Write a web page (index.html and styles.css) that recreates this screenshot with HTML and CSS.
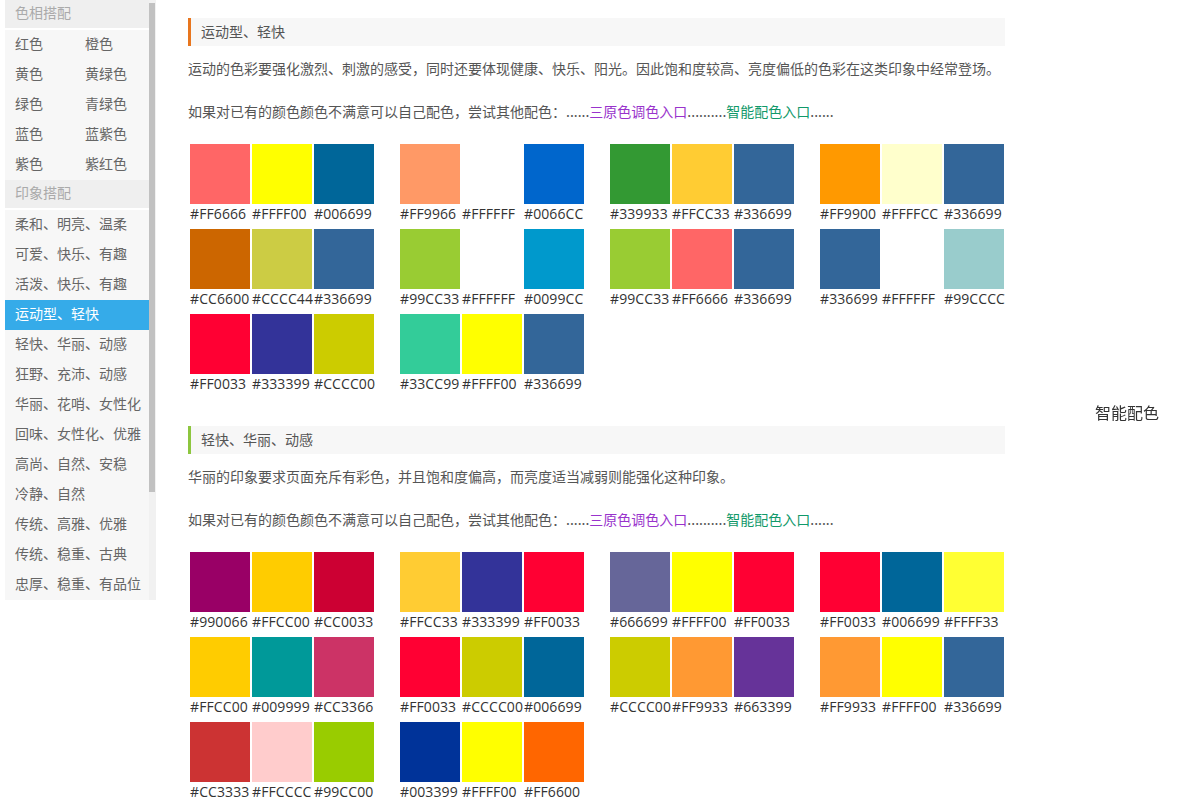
FILE: index.html
```html
<!DOCTYPE html>
<html lang="zh-CN">
<head>
<meta charset="utf-8">
<title>配色</title>
<link rel="stylesheet" href="styles.css">
</head>
<body>
<div class="page">
  <aside class="sidebar">
    <div class="nav">
      <div class="nav-head">色相搭配</div>
      <div class="nav-grid">
        <a class="nav-item">红色</a><a class="nav-item">橙色</a>
        <a class="nav-item">黄色</a><a class="nav-item">黄绿色</a>
        <a class="nav-item">绿色</a><a class="nav-item">青绿色</a>
        <a class="nav-item">蓝色</a><a class="nav-item">蓝紫色</a>
        <a class="nav-item">紫色</a><a class="nav-item">紫红色</a>
      </div>
      <div class="nav-head">印象搭配</div>
      <a class="nav-item">柔和、明亮、温柔</a>
      <a class="nav-item">可爱、快乐、有趣</a>
      <a class="nav-item">活泼、快乐、有趣</a>
      <a class="nav-item active">运动型、轻快</a>
      <a class="nav-item">轻快、华丽、动感</a>
      <a class="nav-item">狂野、充沛、动感</a>
      <a class="nav-item">华丽、花哨、女性化</a>
      <a class="nav-item">回味、女性化、优雅</a>
      <a class="nav-item">高尚、自然、安稳</a>
      <a class="nav-item">冷静、自然</a>
      <a class="nav-item">传统、高雅、优雅</a>
      <a class="nav-item">传统、稳重、古典</a>
      <a class="nav-item">忠厚、稳重、有品位</a>
    </div>
    <div class="track"><div class="thumb"></div></div>
  </aside>

  <main class="main">
    <section class="section">
      <h2 class="title orange">运动型、轻快</h2>
      <p class="desc">运动的色彩要强化激烈、刺激的感受，同时还要体现健康、快乐、阳光。因此饱和度较高、亮度偏低的色彩在这类印象中经常登场。</p>
      <p class="links">如果对已有的颜色颜色不满意可以自己配色，尝试其他配色：......<a class="lk-purple">三原色调色入口</a>..........<a class="lk-green">智能配色入口</a>......</p>
      <div class="palettes">
        <div class="pal"><div class="c"><i style="background:#FF6666"></i><span>#FF6666</span></div><div class="c"><i style="background:#FFFF00"></i><span>#FFFF00</span></div><div class="c"><i style="background:#006699"></i><span>#006699</span></div></div>
        <div class="pal"><div class="c"><i style="background:#FF9966"></i><span>#FF9966</span></div><div class="c"><i style="background:#FFFFFF"></i><span>#FFFFFF</span></div><div class="c"><i style="background:#0066CC"></i><span>#0066CC</span></div></div>
        <div class="pal"><div class="c"><i style="background:#339933"></i><span>#339933</span></div><div class="c"><i style="background:#FFCC33"></i><span>#FFCC33</span></div><div class="c"><i style="background:#336699"></i><span>#336699</span></div></div>
        <div class="pal"><div class="c"><i style="background:#FF9900"></i><span>#FF9900</span></div><div class="c"><i style="background:#FFFFCC"></i><span>#FFFFCC</span></div><div class="c"><i style="background:#336699"></i><span>#336699</span></div></div>

        <div class="pal"><div class="c"><i style="background:#CC6600"></i><span>#CC6600</span></div><div class="c"><i style="background:#CCCC44"></i><span>#CCCC44</span></div><div class="c"><i style="background:#336699"></i><span>#336699</span></div></div>
        <div class="pal"><div class="c"><i style="background:#99CC33"></i><span>#99CC33</span></div><div class="c"><i style="background:#FFFFFF"></i><span>#FFFFFF</span></div><div class="c"><i style="background:#0099CC"></i><span>#0099CC</span></div></div>
        <div class="pal"><div class="c"><i style="background:#99CC33"></i><span>#99CC33</span></div><div class="c"><i style="background:#FF6666"></i><span>#FF6666</span></div><div class="c"><i style="background:#336699"></i><span>#336699</span></div></div>
        <div class="pal"><div class="c"><i style="background:#336699"></i><span>#336699</span></div><div class="c"><i style="background:#FFFFFF"></i><span>#FFFFFF</span></div><div class="c"><i style="background:#99CCCC"></i><span>#99CCCC</span></div></div>

        <div class="pal"><div class="c"><i style="background:#FF0033"></i><span>#FF0033</span></div><div class="c"><i style="background:#333399"></i><span>#333399</span></div><div class="c"><i style="background:#CCCC00"></i><span>#CCCC00</span></div></div>
        <div class="pal"><div class="c"><i style="background:#33CC99"></i><span>#33CC99</span></div><div class="c"><i style="background:#FFFF00"></i><span>#FFFF00</span></div><div class="c"><i style="background:#336699"></i><span>#336699</span></div></div>
      </div>
    </section>

    <section class="section">
      <h2 class="title green">轻快、华丽、动感</h2>
      <p class="desc">华丽的印象要求页面充斥有彩色，并且饱和度偏高，而亮度适当减弱则能强化这种印象。</p>
      <p class="links">如果对已有的颜色颜色不满意可以自己配色，尝试其他配色：......<a class="lk-purple">三原色调色入口</a>..........<a class="lk-green">智能配色入口</a>......</p>
      <div class="palettes">
        <div class="pal"><div class="c"><i style="background:#990066"></i><span>#990066</span></div><div class="c"><i style="background:#FFCC00"></i><span>#FFCC00</span></div><div class="c"><i style="background:#CC0033"></i><span>#CC0033</span></div></div>
        <div class="pal"><div class="c"><i style="background:#FFCC33"></i><span>#FFCC33</span></div><div class="c"><i style="background:#333399"></i><span>#333399</span></div><div class="c"><i style="background:#FF0033"></i><span>#FF0033</span></div></div>
        <div class="pal"><div class="c"><i style="background:#666699"></i><span>#666699</span></div><div class="c"><i style="background:#FFFF00"></i><span>#FFFF00</span></div><div class="c"><i style="background:#FF0033"></i><span>#FF0033</span></div></div>
        <div class="pal"><div class="c"><i style="background:#FF0033"></i><span>#FF0033</span></div><div class="c"><i style="background:#006699"></i><span>#006699</span></div><div class="c"><i style="background:#FFFF33"></i><span>#FFFF33</span></div></div>

        <div class="pal"><div class="c"><i style="background:#FFCC00"></i><span>#FFCC00</span></div><div class="c"><i style="background:#009999"></i><span>#009999</span></div><div class="c"><i style="background:#CC3366"></i><span>#CC3366</span></div></div>
        <div class="pal"><div class="c"><i style="background:#FF0033"></i><span>#FF0033</span></div><div class="c"><i style="background:#CCCC00"></i><span>#CCCC00</span></div><div class="c"><i style="background:#006699"></i><span>#006699</span></div></div>
        <div class="pal"><div class="c"><i style="background:#CCCC00"></i><span>#CCCC00</span></div><div class="c"><i style="background:#FF9933"></i><span>#FF9933</span></div><div class="c"><i style="background:#663399"></i><span>#663399</span></div></div>
        <div class="pal"><div class="c"><i style="background:#FF9933"></i><span>#FF9933</span></div><div class="c"><i style="background:#FFFF00"></i><span>#FFFF00</span></div><div class="c"><i style="background:#336699"></i><span>#336699</span></div></div>

        <div class="pal"><div class="c"><i style="background:#CC3333"></i><span>#CC3333</span></div><div class="c"><i style="background:#FFCCCC"></i><span>#FFCCCC</span></div><div class="c"><i style="background:#99CC00"></i><span>#99CC00</span></div></div>
        <div class="pal"><div class="c"><i style="background:#003399"></i><span>#003399</span></div><div class="c"><i style="background:#FFFF00"></i><span>#FFFF00</span></div><div class="c"><i style="background:#FF6600"></i><span>#FF6600</span></div></div>
      </div>
    </section>
  </main>
</div>
<div class="float-link">智能配色</div>
</body>
</html>
```

FILE: styles.css
```css
html, body {
  margin: 0;
  padding: 0;
  overflow: hidden;
  background: #fff;
}
body {
  font-family: "Noto Sans CJK SC", "Open Sans", sans-serif;
  font-size: 14px;
  color: #555;
}
.page {
  display: flex;
  align-items: flex-start;
}
.sidebar {
  display: flex;
  margin-left: 5px;
  width: 151px;
  height: 600px;
  background: #f7f7f7;
}
.nav {
  width: 144px;
  display: flex;
  flex-direction: column;
}
.nav-head {
  height: 28px;
  line-height: 25px;
  padding-left: 10px;
  background: #efefef;
  color: #aaa;
  border-bottom: 2px solid #fff;
}
.nav-grid {
  display: grid;
  grid-template-columns: 70px 74px;
}
.nav-item {
  display: block;
  height: 30px;
  line-height: 27px;
  padding-left: 10px;
  color: #666;
  white-space: nowrap;
}
.nav-item.active {
  background: #35abe9;
  color: #fff;
}
.track {
  width: 7px;
  background: #f1f1f1;
  padding-top: 3px;
}
.thumb {
  width: 6px;
  height: 489px;
  background: #c1c1c1;
}
.main {
  margin-left: 32px;
  width: 817px;
  padding-top: 18px;
}
.section {
  margin-bottom: 32px;
}
.title {
  margin: 0;
  height: 28px;
  line-height: 27px;
  font-size: 14px;
  font-weight: normal;
  color: #555;
  background: #f7f7f7;
  padding-left: 10px;
  border-left: 3px solid #e8761e;
}
.title.green {
  border-left-color: #8dc63f;
}
.desc {
  margin: 12px 0 0;
  line-height: 20px;
}
.links {
  margin: 23px 0 0;
  line-height: 20px;
}
.lk-purple { color: #9933cc; }
.lk-green { color: #11996a; }
.palettes {
  margin-top: 23px;
  padding-left: 2px;
  display: grid;
  grid-template-columns: repeat(4, 184px);
  column-gap: 26px;
  row-gap: 5px;
}
.pal {
  display: flex;
  gap: 2px;
}
.c {
  width: 60px;
  display: flex;
  flex-direction: column;
}
.c i {
  display: block;
  width: 60px;
  height: 60px;
}
.c span {
  display: block;
  height: 20px;
  line-height: 20px;
  font-family: "Open Sans", "DejaVu Sans", sans-serif;
  font-size: 14px;
  letter-spacing: 0.1px;
  color: #333;
  white-space: nowrap;
}
.float-link {
  position: fixed;
  left: 1095px;
  top: 401px;
  font-size: 16px;
  line-height: 22px;
  color: #333;
}
```
